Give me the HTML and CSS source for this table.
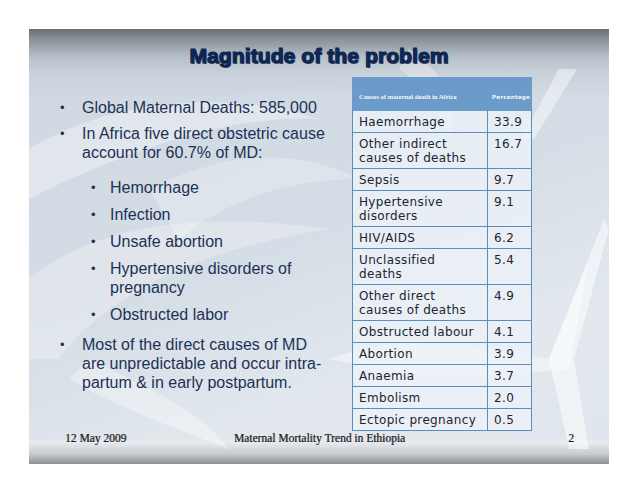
FILE: index.html
```html
<!DOCTYPE html>
<html>
<head>
<meta charset="utf-8">
<link rel="stylesheet" href="styles.css">
</head>
<body>
<div class="slide">
  <svg class="deco" width="580" height="435" viewBox="0 0 580 435" aria-hidden="true">
    <path d="M0 120 C 80 70, 200 60, 290 90 C 220 85, 120 110, 0 170 Z" fill="#ffffff" opacity="0.35"/>
    <path d="M0 250 C 60 200, 160 180, 300 200 C 200 215, 90 250, 30 330 L0 330 Z" fill="#ffffff" opacity="0.28"/>
    <path d="M60 330 C 120 360, 170 380, 200 420 C 150 400, 90 380, 40 350 Z" fill="#ffffff" opacity="0.35"/>
    <path d="M120 160 C 200 120, 270 120, 330 150 C 260 150, 200 170, 150 210 Z" fill="#ffffff" opacity="0.25"/>
    <path d="M530 40 L548 40 L505 110 L492 110 Z" fill="#ffffff" opacity="0.45"/>
    <path d="M300 330 C 380 300, 460 320, 520 330 L560 230 L540 340 C 460 350, 380 350, 300 330 Z" fill="#ffffff" opacity="0.4"/>
    <path d="M520 330 L575 190 L580 200 L545 330 L560 420 L540 420 Z" fill="#ffffff" opacity="0.5"/>
    <path d="M380 20 C 420 50, 430 70, 420 110 C 410 80, 400 60, 370 40 Z" fill="#ffffff" opacity="0.3"/>
  </svg>
  <h1 class="title">Magnitude of the problem</h1>
  <div class="main">
    <ul class="points">
      <li class="p1">Global Maternal Deaths: 585,000</li>
      <li class="p1">In Africa five direct obstetric cause account for 60.7% of MD:
        <ul class="sub">
          <li>Hemorrhage</li>
          <li>Infection</li>
          <li>Unsafe abortion</li>
          <li>Hypertensive disorders of pregnancy</li>
          <li>Obstructed labor</li>
        </ul>
      </li>
      <li class="p1 last">Most of the direct causes of MD are unpredictable and occur intra-partum &amp; in early postpartum.</li>
    </ul>
    <table class="causes">
      <colgroup>
        <col class="c1">
        <col class="c2">
      </colgroup>
      <thead>
        <tr><th class="h1">Causes of maternal death in Africa</th><th class="h2">Percentage</th></tr>
      </thead>
      <tbody>
        <tr><td>Haemorrhage</td><td>33.9</td></tr>
        <tr><td>Other indirect causes of deaths</td><td>16.7</td></tr>
        <tr><td>Sepsis</td><td>9.7</td></tr>
        <tr><td>Hypertensive disorders</td><td>9.1</td></tr>
        <tr><td>HIV/AIDS</td><td>6.2</td></tr>
        <tr><td>Unclassified deaths</td><td>5.4</td></tr>
        <tr><td>Other direct causes of deaths</td><td>4.9</td></tr>
        <tr><td>Obstructed labour</td><td>4.1</td></tr>
        <tr><td>Abortion</td><td>3.9</td></tr>
        <tr><td>Anaemia</td><td>3.7</td></tr>
        <tr><td>Embolism</td><td>2.0</td></tr>
        <tr><td>Ectopic pregnancy</td><td>0.5</td></tr>
      </tbody>
    </table>
  </div>
  <div class="footer">
    <span class="f-date">12 May 2009</span>
    <span class="f-title">Maternal Mortality Trend in Ethiopia</span>
    <span class="f-num">2</span>
  </div>
</div>
</body>
</html>
```
FILE: styles.css
```css
html, body {
  margin: 0;
  padding: 0;
  background: #ffffff;
}

.slide {
  position: relative;
  margin: 29px 0 0 29px;
  width: 580px;
  height: 435px;
  overflow: hidden;
  display: flex;
  flex-direction: column;
  background:
    linear-gradient(to bottom, rgba(232,236,240,0) 0, rgba(232,236,240,0) 410px, #e9ecef 413px, #c9cccf 425px, #8c9094 435px),
    linear-gradient(to bottom, #6a6f74 0, #8f969d 12px, #b7bfc8 28px, #c9d1da 45px, rgba(205,213,222,0) 70px),
    linear-gradient(160deg, #cfd7e0 0%, #d4dce5 45%, #e2e8ee 75%, #dfe5ec 100%);
}

.deco {
  position: absolute;
  left: 0;
  top: 0;
  z-index: 0;
}

.title, .main, .footer {
  position: relative;
  z-index: 1;
}

.title {
  margin: 0;
  padding-top: 15px;
  height: 24px;
  line-height: 24px;
  text-align: center;
  font-family: "Liberation Sans", Arial, sans-serif;
  font-weight: bold;
  font-size: 21px;
  color: #11295a;
  -webkit-text-stroke: 1.1px #0c2350;
  text-shadow: 1px 1px 0 #4a5a72;
  letter-spacing: 0.1px;
}

.main {
  display: grid;
  grid-template-columns: 323px 179px;
  align-items: start;
  margin-top: 9px;
}

.points {
  list-style: none;
  margin: 0;
  padding: 21px 22px 0 53px;
  font-family: "Liberation Sans", Arial, sans-serif;
  font-size: 16px;
  line-height: 19px;
  color: #1d3156;
}

.points li {
  position: relative;
}

.p1 + .p1 {
  margin-top: 7px;
}

.p1::before {
  content: "•";
  position: absolute;
  left: -22px;
  top: 0;
  font-size: 13px;
}

.sub {
  list-style: none;
  margin: 16px 0 0 0;
  padding: 0 0 0 28px;
}

.sub li + li {
  margin-top: 8px;
}

.sub li::before {
  content: "•";
  position: absolute;
  left: -19px;
  top: 0;
  font-size: 13px;
}

.p1.last {
  margin-top: 11px;
}

.causes {
  border-collapse: collapse;
  table-layout: fixed;
  width: 179px;
  font-family: "DejaVu Sans", Verdana, sans-serif;
  font-size: 12px;
  line-height: 14px;
  color: #1c2433;
}

.c1 {
  width: 135px;
}

.c2 {
  width: 44px;
}

.causes th {
  background: #6b9bc9;
  height: 26px;
  padding: 6px 0 0 6px;
  text-align: left;
  color: #eef3f8;
  border: 1px solid #6b9bc9;
  font-weight: bold;
  white-space: nowrap;
  overflow: hidden;
  line-height: 10px;
}

.causes th.h1 {
  font-family: "Liberation Serif", "Times New Roman", serif;
  font-size: 6.8px;
  letter-spacing: -0.1px;
}

.causes th.h2 {
  font-family: "DejaVu Sans", Verdana, sans-serif;
  font-size: 5.6px;
  letter-spacing: 0.2px;
  padding-left: 4px;
}

.causes td {
  background: rgba(236, 241, 246, 0.82);
  border: 1px solid #5d8dbb;
  padding: 4px 5px 3px 6px;
  vertical-align: top;
  letter-spacing: 0.35px;
}

.footer {
  margin-top: auto;
  display: grid;
  grid-template-columns: 1fr auto 1fr;
  align-items: center;
  padding: 0 35px 20px 36px;
  height: 14px;
  line-height: 14px;
  font-family: "Liberation Serif", "Times New Roman", serif;
  font-size: 11.5px;
  color: #1c1c22;
  text-shadow: 0.6px 0.4px 0 rgba(40, 40, 50, 0.55);
}

.f-date {
  justify-self: start;
}

.f-title {
  justify-self: center;
}

.f-num {
  justify-self: end;
}
```
